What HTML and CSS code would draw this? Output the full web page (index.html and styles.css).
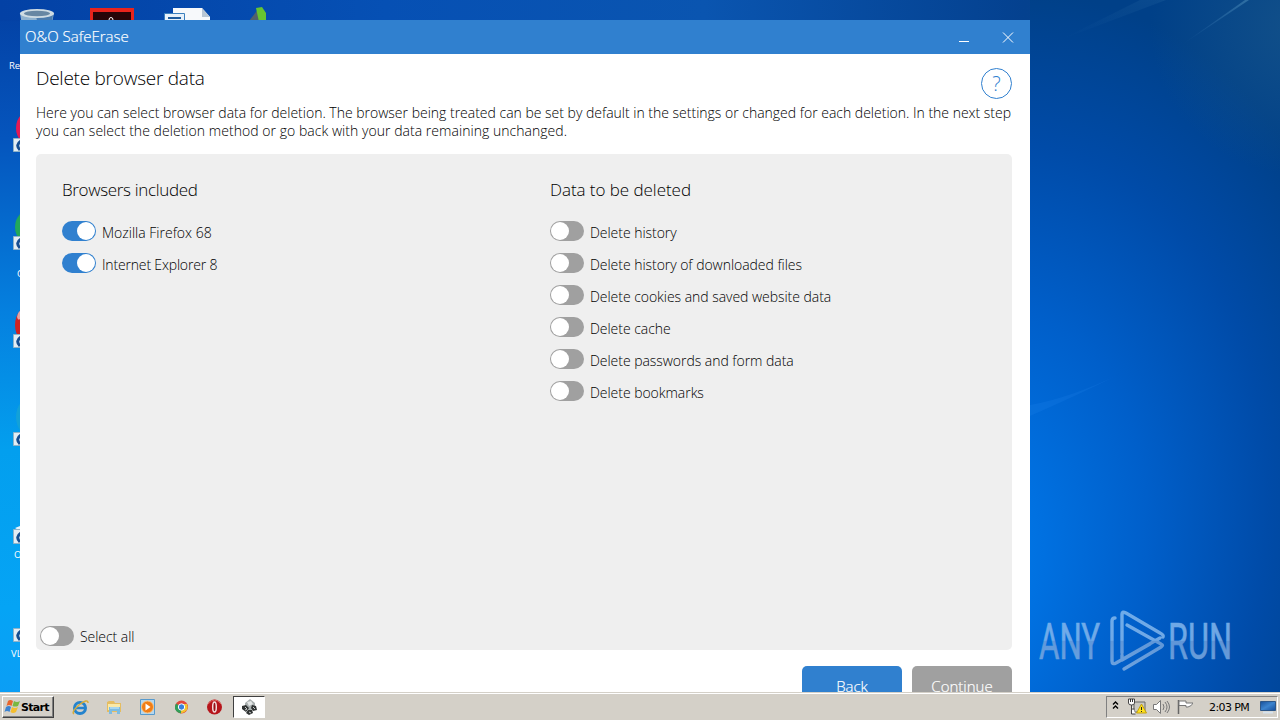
FILE: index.html
```
<!DOCTYPE html>
<html lang="en">
<head>
<meta charset="utf-8">
<title>O&amp;O SafeErase</title>
<link rel="stylesheet" href="styles.css">
</head>
<body>
<main class="desktop">
  <svg class="wallpaper" width="1280" height="692" viewBox="0 0 1280 692">
    <defs>
      <linearGradient id="left" x1="0" y1="0" x2="0" y2="1"><stop offset="0" stop-color="#0340a3"/><stop offset=".2" stop-color="#0555bd"/><stop offset=".45" stop-color="#0580df"/><stop offset=".65" stop-color="#039fee"/><stop offset=".88" stop-color="#05a4f5"/><stop offset="1" stop-color="#0b9ef5"/></linearGradient>
      <linearGradient id="top" x1="0" y1="0" x2="1" y2="0"><stop offset="0" stop-color="#0341a5"/><stop offset=".3" stop-color="#0650b4"/><stop offset=".55" stop-color="#0a55b0"/><stop offset=".8" stop-color="#04418f"/><stop offset="1" stop-color="#114a80"/></linearGradient>
      <radialGradient id="right" gradientUnits="userSpaceOnUse" cx="0" cy="0" r="510" gradientTransform="translate(950 570) rotate(14) scale(.82 1.15)"><stop offset="0" stop-color="#0080ee"/><stop offset=".22" stop-color="#0070e0"/><stop offset=".46" stop-color="#005fca"/><stop offset=".74" stop-color="#004ba8"/><stop offset="1" stop-color="#004088"/></radialGradient>
      <radialGradient id="haze" gradientUnits="userSpaceOnUse" cx="1300" cy="25" r="150"><stop offset="0" stop-color="#24608a" stop-opacity=".5"/><stop offset="1" stop-color="#24608a" stop-opacity="0"/></radialGradient>
      <linearGradient id="ray" x1="0" y1="1" x2="1" y2="0"><stop offset="0" stop-color="#4b8cc4" stop-opacity="0"/><stop offset="1" stop-color="#5b9cc4" stop-opacity=".45"/></linearGradient>
    </defs>
    <rect width="1280" height="692" fill="url(#left)"/>
    <rect width="1280" height="21" fill="url(#top)"/>
    <rect x="1030" width="250" height="692" fill="url(#right)"/>
    <rect x="1030" width="250" height="230" fill="url(#haze)"/>
    <path d="M1180 46L1245 0h4z" fill="url(#ray)"/>
    <path d="M1060 40L1140 0h26z" fill="url(#ray)" opacity=".25"/>
    <path d="M1030 405Q1070 398 1120 374Q1080 394 1030 416z" fill="#3aa0ff" opacity=".12"/>
  </svg>
  <svg class="icons" width="300" height="692" viewBox="0 0 300 692">
    <path d="M20 13L23 32h27L54 13z" fill="#8fb2cf"/><path d="M36 16l3 14h11l3-15z" fill="#4b7cae"/>
    <ellipse cx="37" cy="13.500" rx="17" ry="4.500" fill="#cfdce3"/><ellipse cx="37" cy="13.500" rx="13" ry="2.800" fill="#6787a3"/>
    <path d="M90 8h44v20H90z" fill="#e8241c"/><path d="M93 12h38v16H93z" fill="#280508"/><path d="M109 21v-1a2 2.500 0 0 1 4 0v1" fill="none" stroke="#fff"/>
    <path d="M173 8h29l8 9v11h-37z" fill="#f7f9fb"/><path d="M202 8v9h8z" fill="#b9c7d4"/><path d="M164.500 13.500h20v12h-20z" fill="#e7f1fa" stroke="#3b80be"/><path d="M168 18h13" stroke="#1d5b9d" stroke-width="2"/>
    <path d="M249 21l10-13 3 13z" fill="#52616a"/><path d="M256 8l6-1 4 6v9h-7z" fill="#67c431"/>
    <g><ellipse cx="32" cy="128" rx="16" ry="18" fill="#e41a55"/><ellipse cx="32" cy="227" rx="17" ry="18" fill="#22a85a"/><ellipse cx="32" cy="325" rx="17" ry="20" fill="#cf2323"/><path d="M17 317q1-5 3-6v8q-2 2-3-2z" fill="#f4eaea" opacity=".65"/><ellipse cx="32" cy="417" rx="16" ry="20" fill="#12a1d9"/><path d="M15 528l5-2v5z" fill="#e8f4fc"/></g>
    <g fill="#e3edf4" stroke="#8fb3c9"><path d="M13.500 138.500h10v13h-10zM13.500 236.500h10v13h-10zM13.500 334.500h10v13h-10zM13.500 432.500h10v13h-10zM13.500 529.500h10v14h-10zM13.500 628.500h10v13h-10z"/></g>
    <g fill="none" stroke="#164e91" stroke-width="3"><path d="M21 141q-6 4-1 9M21 239q-6 4-1 9M21 337q-6 4-1 9M21 435q-6 4-1 9M21 533q-6 4-1 9M21 631q-6 4-1 9"/></g>
    <g class="icon-label"><text x="9" y="69">Recycle</text><text x="17" y="277">CCleaner</text><text x="14" y="558">Opera</text><text x="11" y="657">VLC</text></g>
  </svg>
  <svg class="watermark" width="245" height="86" viewBox="1035 606 245 86">
    <defs><linearGradient id="wm" gradientUnits="userSpaceOnUse" x1="0" y1="610" x2="0" y2="672"><stop offset="0" stop-color="#83b9ef"/><stop offset=".49" stop-color="#83b6ec"/><stop offset=".5" stop-color="#70a1dc"/><stop offset="1" stop-color="#82b0e4"/></linearGradient></defs>
    <g class="watermark-text" fill="url(#wm)" stroke="url(#wm)" stroke-width=".6"><text x="1039" y="659" textLength="61" lengthAdjust="spacingAndGlyphs">ANY</text><text x="1168" y="659" textLength="64" lengthAdjust="spacingAndGlyphs">RUN</text></g>
    <path d="M1115 618q-3 0-3 3v40q0 4 4 2l44-25M1122 653v-39q0-3 4-1l34 20q4 2 3 4M1127 625l34 19q3 1 0 3l-37 22M1150 644l-28 16v-5" fill="none" stroke="url(#wm)" stroke-width="3.400" stroke-linecap="round" stroke-linejoin="round"/>
  </svg>

  <section class="window">
    <header class="titlebar">
      <span class="title">O&amp;O SafeErase</span>
      <svg width="56" height="34" viewBox="0 0 56 34"><path d="M0 21.500h10" stroke="#fff"/><path d="M44 12.500l10 10m0-10l-10 10" stroke="#fff" fill="none"/></svg>
    </header>
    <div class="body">
      <div class="heading"><h1>Delete browser data</h1><span class="help">?</span></div>
      <p class="intro"><span class="line1">Here you can select browser data for deletion. The browser being treated can be set by default in the settings or changed for each deletion. In the next step</span><span class="line2">you can select the deletion method or go back with your data remaining unchanged.</span></p>
      <div class="panel">
        <div class="columns">
          <section class="column">
            <h2 class="h-browsers">Browsers included</h2>
            <div class="option"><i class="toggle on"></i><span>Mozilla Firefox 68</span></div>
            <div class="option"><i class="toggle on"></i><span class="explorer">Internet Explorer 8</span></div>
          </section>
          <section class="column data">
            <h2>Data to be deleted</h2>
            <div class="option"><i class="toggle"></i><span>Delete history</span></div>
            <div class="option"><i class="toggle"></i><span>Delete history of downloaded files</span></div>
            <div class="option"><i class="toggle"></i><span>Delete cookies and saved website data</span></div>
            <div class="option"><i class="toggle"></i><span>Delete cache</span></div>
            <div class="option"><i class="toggle"></i><span>Delete passwords and form data</span></div>
            <div class="option"><i class="toggle"></i><span>Delete bookmarks</span></div>
          </section>
        </div>
        <div class="option select-all"><i class="toggle"></i><span>Select all</span></div>
      </div>
      <div class="actions"><div class="button">Back</div><div class="button disabled">Continue</div></div>
    </div>
  </section>
</main>

<footer class="taskbar">
  <div class="start"><svg width="17" height="16" viewBox="0 0 17 16"><path d="M4 2q2-2 5 0L7.500 7Q5 5 2.500 7z" fill="#e9662d"/><path d="M10 2q3 2 6 0l-2 5q-3 1-5.500 0z" fill="#79b840"/><path d="M2 8q3-2 5 0l-1.500 5Q3 11 .5 13z" fill="#3c83d1"/><path d="M8 8q3 2 6 0l-2 5q-3 2-5.500 0z" fill="#f5be2e"/></svg><span>Start</span></div>
  <div class="quick">
    <svg width="17" height="18" viewBox="0 0 17 18"><ellipse cx="8" cy="10" rx="5.500" ry="5.500" fill="none" stroke="#2483cd" stroke-width="3"/><path d="M4 10h10" stroke="#2483cd" stroke-width="2.500"/><path d="M2 16Q-1 14 7 7Q16 0 16 5" fill="none" stroke="#d6ac39" stroke-width="1.500"/></svg>
    <svg width="17" height="18" viewBox="0 0 17 18"><path d="M1 4l2-1h5l1 2h6v9H1z" fill="#e5bd61"/><path d="M2 6h12v6H2z" fill="#fae9a7"/><path d="M3 16V9h11v7h-3v-3H6v3z" fill="#7dbce1"/><path d="M4 10h9" stroke="#d0efff"/></svg>
    <svg width="17" height="18" viewBox="0 0 17 18"><path d="M1.500 1.500h14v15h-14z" fill="#b6d7ee" stroke="#579acd"/><circle cx="8.500" cy="9" r="6" fill="#f17d16" stroke="#fac27d"/><path d="M6.500 5.500l5 3.500-5 3.500z" fill="#fff"/></svg>
    <svg width="17" height="18" viewBox="0 0 17 18"><circle cx="8.500" cy="9" r="6.500" fill="#e4473b"/><path d="M8.500 9L3 5.500Q0 11 5 14.500l3 1z" fill="#319e59"/><path d="M8.500 9V6H14q3 7-6 9.500z" fill="#f2c52e"/><circle cx="8.500" cy="9" r="3.200" fill="#3980dc" stroke="#fff"/></svg>
    <svg width="17" height="18" viewBox="0 0 17 18"><circle cx="8.500" cy="9" r="7.500" fill="#b6151b"/><path d="M2 6q7-8 13 0" stroke="#df6863" fill="none"/><ellipse cx="8.500" cy="9" rx="1.800" ry="5" fill="#981016" stroke="#f3dddd" stroke-width="1.500"/></svg>
  </div>
  <div class="active-task"><svg width="18" height="18" viewBox="0 0 18 18"><path d="M5 5l5-4 5 4v5l-6 3-4-3z" fill="#a8aeae"/><path d="M7 4l4-1 2 3-4 2z" fill="#e3e6e6"/><path d="M2 8l4-1 3 3-3 4-4-3zM12 7l4 1 1 4-4 1-2-3zM8 12l4 0 1 3-4 2-3-2z" fill="#303333"/><path d="M5 9l2 2-2 1M13 9l2 2M9 14l2 1" fill="none" stroke="#c9cccc"/></svg></div>
  <div class="tray">
    <svg width="82" height="22" viewBox="0 0 82 22"><g fill="none" stroke="#000" stroke-width="1.400"><path d="M2 8.500L4.500 6 7 8.500M2 12.500L4.500 10 7 12.500"/></g>
      <g transform="translate(-1 0)"><path d="M24 6h11v10H24z" fill="#c9c8c0" stroke="#696969"/><path d="M18.500 3v4q0 2 3 2t3-2V3zM21.500 9v9h4M21.500 13h3" fill="#fff" stroke="#444"/><path d="M20.500 3v3M22.500 3v3" stroke="#333"/><path d="M31.500 8l5 9h-10z" fill="#ffe21b" stroke="#c3a010"/><path d="M31.500 11v3m0 1v1" stroke="#222"/>
      <path d="M43.500 8.500h3l4-4v13l-4-4h-3z" fill="#fff" stroke="#777"/><path d="M53 8q2 3 0 6M55 6q4 5 0 10M57 5q5 6 0 12" fill="none" stroke="#777"/>
      <path d="M68.500 4v14" stroke="#666" stroke-width="1.500"/><path d="M69 5h7v2h7q-1 3-5 4h-2V9.500h-7z" fill="#fff" stroke="#777"/></g></svg>
    <span class="clock">2:03 PM</span>
    <svg class="monitor" width="16" height="16" viewBox="0 0 16 16"><defs><linearGradient id="screen" x1="0" y1="0" x2="1" y2="1"><stop offset="0" stop-color="#174f99"/><stop offset=".5" stop-color="#3d84ce"/><stop offset="1" stop-color="#154d9b"/></linearGradient></defs><path d="M.5 2.500h15v9H.5z" fill="url(#screen)" stroke="#2e5788"/><path d="M3 13.500h10" stroke="#d6e2ed" stroke-width="2"/></svg>
  </div>
</footer>
</body>
</html>
```

FILE: styles.css
```
* { box-sizing: border-box; }
body { margin: 0; width: 1280px; height: 720px; overflow: hidden; display: flex; flex-direction: column; font-family: "Open Sans", sans-serif; font-size: 14px; font-weight: 300; color: #000; }
svg { display: block; flex: none; }
h1, h2, p { margin: 0; font-weight: 300; white-space: nowrap; }
.desktop { position: relative; height: 692px; flex: none; overflow: hidden; }
.wallpaper, .icons { position: absolute; top: 0; left: 0; }
.icon-label { font: 400 9.500px "Open Sans", sans-serif; fill: #fff; }
.watermark { position: absolute; left: 1035px; top: 606px; opacity: .85; }
.watermark-text { font: 400 50px "Roboto", sans-serif; }
.window { position: absolute; left: 20px; top: 20px; width: 1010px; height: 690px; background: #fff; }
.titlebar { height: 34px; background: #3080cf; color: #fff; display: flex; justify-content: space-between; padding: 0 15px 0 5px; }
.title { font-size: 15px; line-height: 33px; -webkit-text-stroke: .2px #fff; }
.body { padding: 14px 18px 0 16px; }
.heading { height: 34px; display: flex; justify-content: space-between; }
h1 { font-size: 19px; line-height: 20px; letter-spacing: -.25px; }
.help { width: 31px; height: 31px; border: 1px solid #3080cf; border-radius: 50%; color: #3080cf; text-align: center; font-size: 20px; line-height: 30px; }
.intro { line-height: 18px; height: 52px; padding-top: 2px; }
.intro span { display: block; width: max-content; }
.line1 { letter-spacing: -.006px; }
.line2 { letter-spacing: .04px; }
.panel { height: 496px; background: #efefef; border-radius: 5px; display: flex; flex-direction: column; justify-content: space-between; padding: 26px 4px 2px; }
.columns { display: grid; grid-template-columns: 488px 1fr; padding-left: 22px; }
h2 { font-size: 17px; line-height: 20px; margin-bottom: 19px; letter-spacing: -.05px; }
.h-browsers { letter-spacing: -.33px; }
.option { height: 24px; margin-bottom: 8px; display: flex; gap: 6px; white-space: nowrap; line-height: 28px; }
.data .option { letter-spacing: -.04px; }
.explorer { letter-spacing: -.17px; }
.toggle { flex: none; width: 34px; height: 20px; margin-top: 2px; padding: 1px; border-radius: 10px; background: #a0a0a0; display: flex; }
.toggle::before { content: ""; width: 18px; height: 18px; border-radius: 50%; background: #fff; }
.toggle.on { justify-content: flex-end; background: #3080cf; }
.select-all { margin-bottom: 0; line-height: 26px; letter-spacing: -.05px; }
.actions { padding-top: 16px; display: flex; justify-content: flex-end; gap: 10px; }
.button { width: 100px; height: 40px; border-radius: 5px; background: #3080cf; color: #fff; text-align: center; font-size: 15px; line-height: 40px; -webkit-text-stroke: .2px #fff; }
.disabled { background: #a0a0a0; }
.taskbar { height: 28px; flex: none; display: flex; align-items: center; background: #d4d0c8; border-top: 1px solid #d4d0c8; box-shadow: inset 0 1px #fff; padding: 2px 2px 1px 2px; font-family: "DejaVu Sans", sans-serif; font-weight: 400; }
.start { width: 52px; height: 22px; display: flex; align-items: center; padding-left: 1px; border: 1px solid; border-color: #fff #404040 #404040 #fff; box-shadow: inset -1px -1px #808080; font: 700 11px "DejaVu Sans", sans-serif; letter-spacing: -.7px; }
.quick { display: flex; gap: 16.600px; padding-left: 18px; }
.active-task { margin-left: 10px; width: 32px; height: 22px; background: #fff; border: 1px solid; border-color: #404040 #fff #fff #404040; display: flex; justify-content: center; align-items: center; }
.tray { margin-left: auto; width: 172px; height: 22px; display: flex; align-items: center; border: 1px solid; border-color: #808080 #fff #fff #808080; padding-left: 4px; }
.clock { width: 49px; margin-left: 16px; font-size: 11px; letter-spacing: -.6px; white-space: nowrap; }
.monitor { margin-left: 2px; }
```
